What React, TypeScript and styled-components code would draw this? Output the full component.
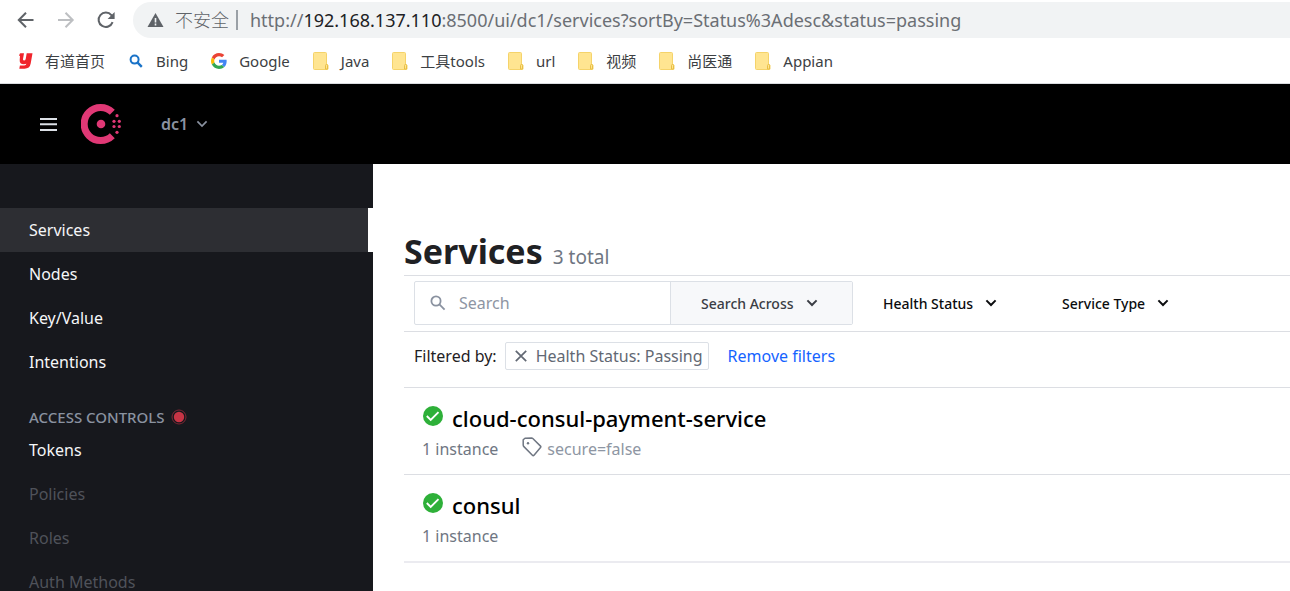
import React from "react";
import styled, { createGlobalStyle } from "styled-components";

const GlobalStyle = createGlobalStyle`
  *, *::before, *::after { box-sizing: border-box; }
  body {
    margin: 0;
    background: #fff;
    color: #1f2124;
    font-family: "Noto Sans", "Noto Sans CJK SC", sans-serif;
    font-size: 16px;
  }
  button, input { font: inherit; color: inherit; }
  button { background: none; border: 0; padding: 0; cursor: pointer; }
  a { color: inherit; text-decoration: none; }
  ul, h1, h2, p { margin: 0; padding: 0; list-style: none; }
  svg { display: block; flex: none; }
`;

const Window = styled.div`
  display: flex;
  flex-direction: column;
  height: 100vh;
  overflow: hidden;
`;

/* Browser chrome */

const Toolbar = styled.div`
  display: flex;
  align-items: center;
  height: 40px;
  padding-left: 16px;
  flex: none;
`;

const NavButtons = styled.div`
  display: flex;
  align-items: center;
  gap: 20px;
  width: 117px;
`;

const IconButton = styled.button`
  display: flex;
  color: ${(p) => p.color};
`;

const AddressBar = styled.div`
  display: flex;
  align-items: center;
  flex: 1;
  height: 36px;
  padding-left: 14px;
  border-radius: 18px 0 0 18px;
  background: #f1f3f4;
  color: #5f6368;
  white-space: nowrap;
`;

const Insecure = styled.span`
  margin-left: 11px;
  padding-right: 7px;
  border-right: 2px solid #9aa0a6;
  font-size: 18px;
  font-weight: 300;
  line-height: 20px;
`;

const Url = styled.span`
  margin-left: 12px;
  font-size: 18px;
  color: #6b6f74;
  b {
    font-weight: 400;
    color: #202124;
  }
`;

const Bookmarks = styled.nav`
  display: flex;
  align-items: center;
  gap: 23px;
  height: 44px;
  padding: 0 0 2px 17px;
  border-bottom: 1px solid #dadce0;
  flex: none;
`;

const Bookmark = styled.a`
  display: flex;
  align-items: center;
  gap: 12px;
  color: #3c4043;
  font-size: 15px;
  line-height: 20px;
  white-space: nowrap;
`;

/* Consul UI */

const Header = styled.header`
  display: flex;
  align-items: center;
  height: 80px;
  padding-left: 40px;
  background: #000;
  color: #dce0e6;
  flex: none;
`;

const LogoLink = styled.a`
  margin-left: 24px;
`;

const Datacenter = styled.button`
  display: flex;
  align-items: center;
  gap: 8px;
  margin-left: 38px;
  color: #8a92a0;
  font-weight: 600;
`;

const Body = styled.div`
  display: flex;
  flex: 1;
  min-height: 0;
`;

const Sidebar = styled.nav`
  width: 373px;
  padding-top: 44px;
  background: #17181d;
  overflow: hidden;
  flex: none;
`;

const NavLink = styled.a<{ $active?: boolean; $muted?: boolean }>`
  display: block;
  padding-left: 29px;
  line-height: 44px;
  color: ${(p) => (p.$muted ? "#4f525a" : "#f5f6f8")};
  background: ${(p) => (p.$active ? "#2d2e33" : "transparent")};
  border-right: ${(p) => (p.$active ? "5px solid #fff" : "0")};
`;

const NavHeading = styled.h2`
  display: flex;
  align-items: center;
  gap: 6px;
  height: 44px;
  padding: 22px 0 0 29px;
  color: #8a92a0;
  font-size: 15px;
  font-weight: 500;
  line-height: 22px;
`;

const Main = styled.main`
  flex: 1;
  min-width: 0;
  padding: 63px 0 0 31px;
`;

const Title = styled.div`
  display: flex;
  align-items: baseline;
  gap: 10px;
  height: 48px;
  line-height: 48px;
  h1 {
    font-size: 34px;
    font-weight: 700;
  }
  p {
    color: #6f7682;
    font-size: 19px;
  }
`;

const FilterBar = styled.form`
  display: flex;
  align-items: center;
  height: 57px;
  padding: 0 0 1px 10px;
  border: solid #dcdee3;
  border-width: 1px 0;
`;

const SearchGroup = styled.div`
  display: flex;
  width: 439px;
  height: 44px;
  border: 1px solid #dce0e6;
  border-radius: 2px;
`;

const SearchLabel = styled.label`
  display: flex;
  align-items: center;
  gap: 13px;
  flex: 1;
  min-width: 0;
  padding-left: 15px;
  color: #8a92a0;
`;

const SearchInput = styled.input`
  flex: 1;
  min-width: 0;
  padding: 0;
  border: 0;
  outline: 0;
  background: none;
  &::placeholder {
    color: #8e95a3;
    opacity: 1;
  }
`;

const MenuButton = styled.button<{ $boxed?: boolean }>`
  display: flex;
  align-items: center;
  justify-content: ${(p) => (p.$boxed ? "flex-start" : "center")};
  gap: 12px;
  width: ${(p) => (p.$boxed ? "182px" : "auto")};
  padding-left: ${(p) => (p.$boxed ? "30px" : "0")};
  margin-left: ${(p) => (p.$boxed ? "0" : "30px")};
  margin-right: ${(p) => (p.$boxed ? "0" : "35px")};
  color: ${(p) => (p.$boxed ? "#3a3d44" : "#0b0c0e")};
  background: ${(p) => (p.$boxed ? "#f7f8fa" : "none")};
  border-left: ${(p) => (p.$boxed ? "1px solid #dce0e6" : "0")};
  font-size: 14px;
  font-weight: 500;
  white-space: nowrap;
`;

const ActiveFilters = styled.div`
  display: flex;
  align-items: center;
  height: 55px;
  padding: 0 0 7px 10px;
  white-space: nowrap;
`;

const FilterChip = styled.button`
  display: flex;
  align-items: center;
  gap: 9px;
  height: 28px;
  margin-left: 8px;
  padding: 0 5px 0 9px;
  border: 1px solid #dce0e6;
  border-radius: 2px;
  color: #626873;
`;

const RemoveLink = styled.a`
  margin-left: 19px;
  color: #1563ff;
`;

const ServiceItem = styled.li`
  height: 87px;
  padding: 14px 0 0 18px;
  border-top: 1px solid #dcdee3;
`;

const ServiceList = styled.ul`
  border-bottom: 2px solid #ebebf0;
`;

const ServiceName = styled.a`
  display: flex;
  align-items: center;
  gap: 8px;
  color: #000;
  font-size: 22px;
  font-weight: 500;
  line-height: 32px;
`;

const ServiceMeta = styled.div`
  display: flex;
  align-items: center;
  gap: 24px;
  color: #6f7682;
  line-height: 30px;
`;

const Tag = styled.span`
  display: flex;
  align-items: center;
  gap: 5px;
  color: #8e96a3;
`;

const Chevron = ({ size = 12, width = 2 }: { size?: number; width?: number }) => (
  <svg width={size} height={size} viewBox="0 0 12 12" fill="none" stroke="currentColor" strokeWidth={width}>
    <path d="M1.4 3.4 6 8l4.6-4.6" />
  </svg>
);

const BackIcon = () => (
  <svg width="20" height="20" viewBox="0 0 20 20" fill="none" stroke="currentColor" strokeWidth="2">
    <path d="M17.5 10H3M10 2.8 2.8 10l7.2 7.2" />
  </svg>
);

const ForwardIcon = () => (
  <svg width="20" height="20" viewBox="0 0 20 20" fill="none" stroke="currentColor" strokeWidth="2">
    <path d="M2 10h14.5M9.5 2.8l7.2 7.2-7.2 7.2" />
  </svg>
);

const ReloadIcon = () => (
  <svg width="20" height="20" viewBox="0 0 20 20" fill="none" stroke="currentColor" strokeWidth="2">
    <path d="M16.6 12.2A7.2 7.2 0 1 1 15.4 5.2l1.6 1.8" />
    <path d="M18.6 2v7h-7z" fill="currentColor" stroke="none" />
  </svg>
);

const WarningIcon = () => (
  <svg width="17" height="16" viewBox="0 0 17 16">
    <path d="M8.5 1 16.5 15H.5z" fill="#5f6368" />
    <path d="M8.5 6v4.4M8.5 11.6v1.8" stroke="#f1f3f4" strokeWidth="1.6" />
  </svg>
);

const YoudaoIcon = () => (
  <svg width="16" height="16" viewBox="0 0 16 16" fill="#f0252c">
    <path d="M3.300.2H7L6 6q-.2 1.400.900 1.400 1.500 0 1.800-1.500L9.700.2h5.800l-1.800 10.300q-.9 5.200-6.200 5.200H2.300l.6-3.300h4.300q1.800 0 2.200-1.600-1 .4-2.500.4-4.600 0-4.200-4.200L3 3H2.200q.2-2.800 1.100-2.800z" />
  </svg>
);

const BingIcon = () => (
  <svg width="16" height="16" viewBox="0 0 16 16" fill="none" stroke="#1a73c8" strokeWidth="2">
    <circle cx="6.600" cy="6.600" r="4" />
    <path d="m9.600 9.600 4.200 4.200" strokeWidth="2.400" />
  </svg>
);

const GoogleIcon = () => (
  <svg width="16" height="16" viewBox="0 0 48 48">
    <path fill="#EA4335" d="M24 9.500c3.540 0 6.710 1.220 9.210 3.600l6.850-6.850C35.900 2.380 30.470 0 24 0 14.620 0 6.510 5.380 2.560 13.220l7.980 6.190C12.430 13.720 17.740 9.500 24 9.500z" />
    <path fill="#4285F4" d="M46.980 24.550c0-1.570-.15-3.090-.38-4.550H24v9.020h12.940c-.58 2.960-2.260 5.480-4.780 7.180l7.730 6c4.510-4.180 7.090-10.360 7.090-17.650z" />
    <path fill="#FBBC05" d="M10.530 28.590c-.48-1.450-.76-2.990-.76-4.590s.27-3.140.76-4.590l-7.980-6.190C.92 16.460 0 20.120 0 24c0 3.880.92 7.540 2.560 10.780l7.970-6.190z" />
    <path fill="#34A853" d="M24 48c6.480 0 11.930-2.130 15.890-5.810l-7.730-6c-2.150 1.450-4.920 2.300-8.160 2.300-6.260 0-11.570-4.220-13.470-9.910l-7.980 6.190C6.510 42.620 14.620 48 24 48z" />
  </svg>
);

const FolderIcon = () => (
  <svg width="16" height="18" viewBox="0 0 16 18">
    <path d="M1.500.5h11q1 0 1 1v10.800l1.500.7v4q0 .5-.6.5H1.500q-1 0-1-1v-15q0-1 1-1z" fill="#ffe591" stroke="#f5d36a" />
    <path d="M12.500 17v-3.500q0-1 1-1t1 1V17z" fill="#ffe591" stroke="#e8bf45" />
  </svg>
);

const MenuIcon = () => (
  <svg width="17" height="14" viewBox="0 0 17 14" stroke="currentColor" strokeWidth="2">
    <path d="M0 2h17M0 7.300h17M0 13h17" />
  </svg>
);

const ConsulLogo = () => (
  <svg width="42" height="40" viewBox="0 0 42 40" fill="#e03875">
    <path d="M31.300 8.300A16.500 16.500 0 1 0 31.300 31.700" fill="none" stroke="#e03875" strokeWidth="7" />
    <circle cx="20" cy="20" r="4.300" />
    <circle cx="36" cy="11.700" r="1.600" />
    <circle cx="33" cy="17.300" r="1.600" />
    <circle cx="38.300" cy="17.300" r="1.600" />
    <circle cx="33" cy="22.500" r="1.600" />
    <circle cx="38.300" cy="22.500" r="1.600" />
    <circle cx="36" cy="28.300" r="1.600" />
  </svg>
);

const StatusDot = () => (
  <svg width="16" height="16" viewBox="0 0 16 16">
    <circle cx="8" cy="8" r="7" fill="none" stroke="#7c2634" />
    <circle cx="8" cy="8" r="5.200" fill="#c73445" />
  </svg>
);

const SearchIcon = () => (
  <svg width="16" height="18" viewBox="0 0 16 18" fill="none" stroke="currentColor" strokeWidth="1.800">
    <circle cx="6" cy="7" r="4.600" />
    <path d="m9.400 10.400 5.200 5.200" />
  </svg>
);

const CloseIcon = () => (
  <svg width="12" height="12" viewBox="0 0 12 12" fill="none" stroke="currentColor" strokeWidth="1.700">
    <path d="m.8.8 10.400 10.400M11.200.8.8 11.200" />
  </svg>
);

const PassingIcon = () => (
  <svg width="22" height="26" viewBox="0 0 22 26">
    <circle cx="11" cy="11" r="10" fill="#2eb039" />
    <path d="m4.800 11 3.900 3.900 7.800-7.800" fill="none" stroke="#fff" strokeWidth="1.900" />
  </svg>
);

const TagIcon = () => (
  <svg width="20" height="24" viewBox="0 0 20 24" fill="none" stroke="#6f7682" strokeWidth="1.500" strokeLinejoin="round">
    <path d="M1.200 8V2.800L3 1.200l6.600-.2q.7 0 1.200.5l7.700 7.600q.7.700 0 1.400L12 18.200q-.8.800-1.600 0L1.900 9.600q-.7-.7-.7-1.600z" />
    <circle cx="6" cy="6.200" r="1.200" fill="#6f7682" stroke="none" />
  </svg>
);

const bookmarks = [
  { label: "有道首页", icon: <YoudaoIcon /> },
  { label: "Bing", icon: <BingIcon /> },
  { label: "Google", icon: <GoogleIcon /> },
  { label: "Java" },
  { label: "工具tools" },
  { label: "url" },
  { label: "视频" },
  { label: "尚医通" },
  { label: "Appian" },
];

const services = [
  { name: "cloud-consul-payment-service", tag: "secure=false" },
  { name: "consul" },
];

export default function App() {
  return (
    <>
      <GlobalStyle />
      <Window>
        <Toolbar>
          <NavButtons>
            <IconButton color="#5f6368" aria-label="Back"><BackIcon /></IconButton>
            <IconButton color="#bdbfc2" aria-label="Forward"><ForwardIcon /></IconButton>
            <IconButton color="#5f6368" aria-label="Reload"><ReloadIcon /></IconButton>
          </NavButtons>
          <AddressBar>
            <WarningIcon />
            <Insecure>不安全</Insecure>
            <Url>http://<b>192.168.137.110</b>:8500/ui/dc1/services?sortBy=Status%3Adesc&amp;status=passing</Url>
          </AddressBar>
        </Toolbar>
        <Bookmarks aria-label="Bookmarks">
          {bookmarks.map((b) => (
            <Bookmark href="#" key={b.label}>
              {b.icon ?? <FolderIcon />}
              {b.label}
            </Bookmark>
          ))}
        </Bookmarks>
        <Header>
          <IconButton aria-label="Menu"><MenuIcon /></IconButton>
          <LogoLink href="#" aria-label="Consul"><ConsulLogo /></LogoLink>
          <Datacenter>dc1 <Chevron width={1.7} /></Datacenter>
        </Header>
        <Body>
          <Sidebar aria-label="Main">
            <NavLink href="#" $active>Services</NavLink>
            <NavLink href="#">Nodes</NavLink>
            <NavLink href="#">Key/Value</NavLink>
            <NavLink href="#">Intentions</NavLink>
            <NavHeading>ACCESS CONTROLS <StatusDot /></NavHeading>
            <NavLink href="#">Tokens</NavLink>
            <NavLink href="#" $muted>Policies</NavLink>
            <NavLink href="#" $muted>Roles</NavLink>
            <NavLink href="#" $muted>Auth Methods</NavLink>
          </Sidebar>
          <Main>
            <Title>
              <h1>Services</h1>
              <p>3 total</p>
            </Title>
            <FilterBar>
              <SearchGroup>
                <SearchLabel>
                  <SearchIcon />
                  <SearchInput type="text" placeholder="Search" aria-label="Search" />
                </SearchLabel>
                <MenuButton type="button" $boxed>Search Across <Chevron /></MenuButton>
              </SearchGroup>
              <MenuButton type="button">Health Status <Chevron /></MenuButton>
              <MenuButton type="button">Service Type <Chevron /></MenuButton>
            </FilterBar>
            <ActiveFilters>
              Filtered by:
              <FilterChip><CloseIcon /> Health Status: Passing</FilterChip>
              <RemoveLink href="#">Remove filters</RemoveLink>
            </ActiveFilters>
            <ServiceList>
              {services.map((s) => (
                <ServiceItem key={s.name}>
                  <ServiceName href="#"><PassingIcon />{s.name}</ServiceName>
                  <ServiceMeta>
                    <span>1 instance</span>
                    {s.tag && <Tag><TagIcon />{s.tag}</Tag>}
                  </ServiceMeta>
                </ServiceItem>
              ))}
            </ServiceList>
          </Main>
        </Body>
      </Window>
    </>
  );
}
